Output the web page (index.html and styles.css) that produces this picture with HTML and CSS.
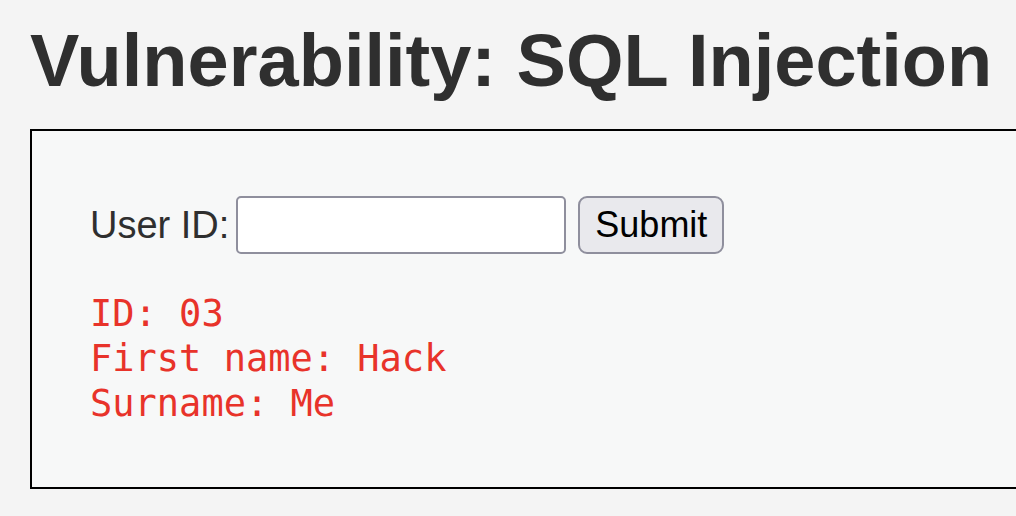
FILE: index.html
```html
<!DOCTYPE html>
<html>
<head>
<meta charset="utf-8">
<link rel="stylesheet" href="styles.css">
</head>
<body>
<div class="page">
  <h1 class="title">Vulnerability: SQL Injection</h1>
  <div class="vulnerable-box">
    <form class="query-form">
      <label class="field-label">User ID:</label>
      <input class="field-input" type="text">
      <button class="submit-btn" type="button">Submit</button>
    </form>
    <pre class="result">ID: 03
First name: Hack
Surname: Me</pre>
  </div>
</div>
</body>
</html>
```

FILE: styles.css
```css
html, body {
  margin: 0;
  padding: 0;
  overflow: hidden;
  background: #f4f4f4;
}

.page {
  padding: 18px 0 0 30px;
  font-family: "Liberation Sans", Arial, sans-serif;
}

.title {
  margin: 0 0 26px 0;
  font-size: 74px;
  line-height: 85px;
  font-weight: bold;
  color: #2f2f2f;
  white-space: nowrap;
}

.vulnerable-box {
  width: 1200px;
  height: 360px;
  box-sizing: border-box;
  border: 2px solid #000;
  background: #f7f8f8;
  padding: 65px 0 0 58px;
}

.query-form {
  display: flex;
  align-items: center;
  margin: 0;
}

.field-label {
  font-size: 38px;
  color: #2f2f2f;
  margin-right: 7px;
}

.field-input {
  width: 330px;
  height: 58px;
  box-sizing: border-box;
  border: 2px solid #8f8f9d;
  border-radius: 5px;
  background: #fff;
  margin: 0 12px 0 0;
  padding: 0;
}

.submit-btn {
  width: 146px;
  height: 58px;
  box-sizing: border-box;
  border: 2px solid #8f8f9d;
  border-radius: 9px;
  background: #e9e9ed;
  color: #000;
  font-family: "Liberation Sans", Arial, sans-serif;
  font-size: 36px;
  padding: 0;
}

.result {
  margin: 37px 0 0 0;
  font-family: "DejaVu Sans Mono", Menlo, monospace;
  font-size: 37px;
  line-height: 45px;
  color: #e8332a;
}
```
